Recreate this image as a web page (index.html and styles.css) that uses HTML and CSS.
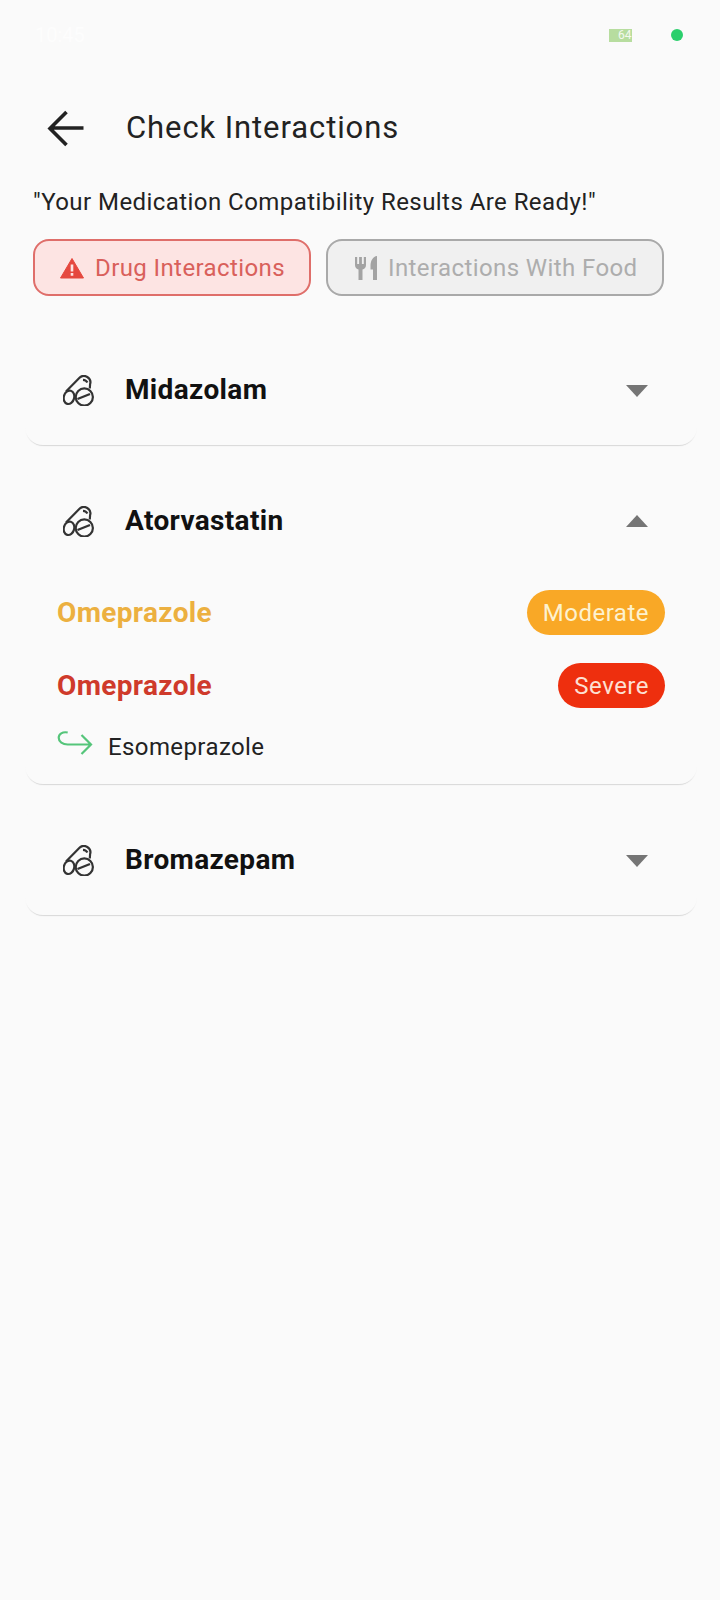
FILE: index.html
```html
<!DOCTYPE html>
<html lang="en">
<head>
<meta charset="utf-8">
<title>Check Interactions</title>
<link rel="stylesheet" href="styles.css">
</head>
<body>
<div class="status">
  <span class="status-time">10:45</span>
  <span class="status-right"><span class="battery">64</span><span class="dot"></span></span>
</div>
<header class="appbar">
  <svg class="back" viewBox="0 0 38 38" width="38" height="38"><path d="M36.500 19H3M19.500 3 3 19.500 19.500 36" fill="none" stroke="#222" stroke-width="3.600"/></svg>
  <h1 class="title">Check Interactions</h1>
</header>
<p class="subtitle">"Your Medication Compatibility Results Are Ready!"</p>
<div class="tabs">
  <div class="tab tab-on">
    <svg class="tab-icon" viewBox="0 0 24 22" width="24" height="22"><path d="M12 1.500 23.500 21H.5Z" fill="#e5483f" stroke="#e5483f" stroke-linejoin="round"/><path d="M10.700 7.500h2.600v7h-2.600zM10.700 16h2.600v2.800h-2.600z" fill="#fde4e3"/></svg>
    <span>Drug Interactions</span>
  </div>
  <div class="tab tab-off">
    <svg class="tab-icon" viewBox="0 0 24 24" width="24" height="24"><path d="M1 1h2.200v7h1.900V1h2.800v7h1.900V1H12v8c0 2.500-1.500 4-3.500 4.500V24H4.500V13.500C2.500 13 1 11.500 1 9ZM23 0c-4 .5-6.500 4.500-6.500 10v3.500H19V24h4Z" fill="#a3a3a3"/></svg>
    <span>Interactions With Food</span>
  </div>
</div>
<main class="list">
  <section class="card">
    <div class="card-head">
      <svg class="pill" viewBox="0 0 31 31" width="31" height="31"><g fill="none" stroke="#333" stroke-width="2.200"><path d="M3 16.500 16.500 2.800c2-2 5.200-2.400 7.800-.8 2.800 1.800 3.600 4.600 2.800 7l-.3 4.500"/><path d="M20 4.800c2 .1 3.500 1 4.400 2.800"/><ellipse cx="6" cy="22.300" rx="5.200" ry="6.800" transform="rotate(15 6 22.300)"/><circle cx="21.300" cy="22" r="8.600"/><path d="m14.500 24 12.500-5"/></g></svg>
      <h2 class="drug">Midazolam</h2>
      <span class="caret caret-down"></span>
    </div>
  </section>
  <section class="card">
    <div class="card-head">
      <svg class="pill" viewBox="0 0 31 31" width="31" height="31"><g fill="none" stroke="#333" stroke-width="2.200"><path d="M3 16.500 16.500 2.800c2-2 5.200-2.400 7.800-.8 2.800 1.800 3.600 4.600 2.800 7l-.3 4.500"/><path d="M20 4.800c2 .1 3.500 1 4.400 2.800"/><ellipse cx="6" cy="22.300" rx="5.200" ry="6.800" transform="rotate(15 6 22.300)"/><circle cx="21.300" cy="22" r="8.600"/><path d="m14.500 24 12.500-5"/></g></svg>
      <h2 class="drug">Atorvastatin</h2>
      <span class="caret caret-up"></span>
    </div>
    <div class="card-body">
      <div class="row">
        <span class="name name-moderate">Omeprazole</span>
        <span class="badge badge-moderate">Moderate</span>
      </div>
      <div class="row">
        <span class="name name-severe">Omeprazole</span>
        <span class="badge badge-severe">Severe</span>
      </div>
      <div class="alt">
        <svg class="alt-icon" viewBox="0 0 36 26" width="36" height="26"><path d="M10.700 1.500C5.500.5 1.700 3 1.700 6.800c0 4 4 6.700 9 6.700H33.500M24.500 4l9.500 9.500L24.500 23" fill="none" stroke="#55c57a" stroke-width="2.200"/></svg>
        <span class="alt-name">Esomeprazole</span>
      </div>
    </div>
  </section>
  <section class="card">
    <div class="card-head">
      <svg class="pill" viewBox="0 0 31 31" width="31" height="31"><g fill="none" stroke="#333" stroke-width="2.200"><path d="M3 16.500 16.500 2.800c2-2 5.200-2.400 7.800-.8 2.800 1.800 3.600 4.600 2.800 7l-.3 4.500"/><path d="M20 4.800c2 .1 3.500 1 4.400 2.800"/><ellipse cx="6" cy="22.300" rx="5.200" ry="6.800" transform="rotate(15 6 22.300)"/><circle cx="21.300" cy="22" r="8.600"/><path d="m14.500 24 12.500-5"/></g></svg>
      <h2 class="drug">Bromazepam</h2>
      <span class="caret caret-down"></span>
    </div>
  </section>
</main>
</body>
</html>
```
FILE: styles.css
```css
* { box-sizing: border-box; }
html, body { margin: 0; padding: 0; }
body {
  width: 720px;
  height: 1600px;
  overflow: hidden;
  background: #fafafa;
  font-family: Roboto, "Liberation Sans", sans-serif;
  color: #1f1f1f;
}
.status {
  height: 70px;
  margin-bottom: 30px;
  display: flex;
  justify-content: space-between;
  align-items: center;
  padding: 0 37px 0 35px;
}
.status-time { color: #fdfdfd; font-size: 20px; }
.status-right { display: flex; align-items: center; gap: 39px; }
.battery {
  width: 23px;
  height: 13px;
  background: #b7dd9f;
  color: #f4f9ef;
  font-size: 12px;
  line-height: 13px;
  padding-left: 9px;
  overflow: hidden;
}
.dot { width: 12px; height: 12px; border-radius: 50%; background: #2bcf6c; }
.appbar {
  height: 68px;
  display: flex;
  align-items: center;
  gap: 41px;
  padding: 0 0 13px 47px;
}
.back { flex: none; }
.title { margin: 0; font-size: 31px; font-weight: 400; letter-spacing: .9px; color: #222; }
.subtitle {
  margin: 17px 0 0;
  padding-left: 33px;
  height: 34px;
  line-height: 34px;
  font-size: 24px;
  letter-spacing: .44px;
  color: #222;
}
.tabs { display: flex; gap: 15px; margin: 20px 0 0 33px; }
.tab {
  height: 57px;
  border-radius: 16px;
  display: flex;
  align-items: center;
  gap: 11px;
  font-size: 24px;
  letter-spacing: .4px;
  border: 2px solid;
}
.tab-on { width: 278px; padding-left: 25px; background: #fde4e3; border-color: #df6e6a; color: #d9605b; }
.tab-off { width: 338px; padding-left: 26px; gap: 10px; background: #f0f0f0; border-color: #a9a9a9; color: #adadad; }
.tab-icon { flex: none; }
.list {
  margin: 39px 23px 0 25px;
  display: flex;
  flex-direction: column;
  gap: 21px;
}
.card {
  border-radius: 18px;
  background: #fafafa;
  box-shadow: 0 2px 1px -1px #d8d8d8;
}
.card-head {
  height: 110px;
  display: flex;
  align-items: center;
  padding: 0 49px 0 38px;
}
.pill { flex: none; }
.drug { margin: 0 0 2px 31px; flex: 1; font-size: 28px; font-weight: 700; letter-spacing: .35px; color: #111; }
.caret { width: 0; height: 0; border-left: 11px solid transparent; border-right: 11px solid transparent; }
.caret-down { border-top: 12px solid #757575; margin-top: 2px; }
.caret-up { border-bottom: 12px solid #757575; }
.card-body { padding: 0 32px 18px 32px; margin-top: 14px; }
.row {
  height: 45px;
  display: flex;
  align-items: center;
  justify-content: space-between;
  margin-bottom: 28px;
}
.name { font-size: 28px; font-weight: 700; letter-spacing: .35px; }
.name-moderate { color: #ecb040; }
.name-severe { color: #cf3a2b; }
.badge {
  height: 45px;
  border-radius: 23px;
  padding: 0 16px;
  display: flex;
  align-items: center;
  font-size: 24px;
  letter-spacing: .5px;
}
.badge-moderate { background: #f9a826; color: #fdf2cf; }
.badge-severe { background: #ee2f0e; color: #fde0d3; }
.alt { display: flex; align-items: center; gap: 15px; margin-top: -8px; height: 38px; }
.alt-icon { flex: none; margin-top: -6px; }
.alt-name { font-size: 24px; letter-spacing: .4px; color: #222; }
```
